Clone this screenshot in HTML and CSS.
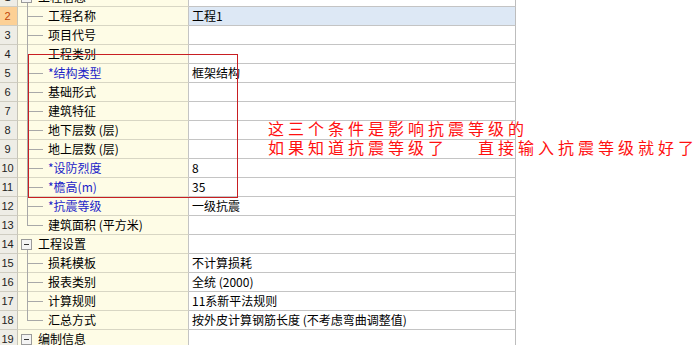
FILE: index.html
```html
<!DOCTYPE html>
<html lang="zh-CN">
<head>
<meta charset="utf-8">
<title>工程信息</title>
<link rel="stylesheet" href="styles.css">
</head>
<body>
<div class="sheet">
  <div class="row"><div class="num">1</div><div class="tree group"><span class="toggle"></span>工程信息</div><div class="val"></div></div>
  <div class="row sel"><div class="num">2</div><div class="tree child">工程名称</div><div class="val">工程1</div></div>
  <div class="row"><div class="num">3</div><div class="tree child">项目代号</div><div class="val"></div></div>
  <div class="row"><div class="num">4</div><div class="tree child">工程类别</div><div class="val"></div></div>
  <div class="row"><div class="num">5</div><div class="tree child req">*结构类型</div><div class="val">框架结构</div></div>
  <div class="row"><div class="num">6</div><div class="tree child">基础形式</div><div class="val"></div></div>
  <div class="row"><div class="num">7</div><div class="tree child">建筑特征</div><div class="val"></div></div>
  <div class="row"><div class="num">8</div><div class="tree child">地下层数 (层)</div><div class="val"></div></div>
  <div class="row"><div class="num">9</div><div class="tree child">地上层数 (层)</div><div class="val"></div></div>
  <div class="row"><div class="num">10</div><div class="tree child req">*设防烈度</div><div class="val">8</div></div>
  <div class="row"><div class="num">11</div><div class="tree child req">*檐高(m)</div><div class="val">35</div></div>
  <div class="row"><div class="num">12</div><div class="tree child req">*抗震等级</div><div class="val">一级抗震</div></div>
  <div class="row"><div class="num">13</div><div class="tree child last">建筑面积 (平方米)</div><div class="val"></div></div>
  <div class="row"><div class="num">14</div><div class="tree group"><span class="toggle"></span>工程设置</div><div class="val"></div></div>
  <div class="row"><div class="num">15</div><div class="tree child">损耗模板</div><div class="val">不计算损耗</div></div>
  <div class="row"><div class="num">16</div><div class="tree child">报表类别</div><div class="val">全统 (2000)</div></div>
  <div class="row"><div class="num">17</div><div class="tree child">计算规则</div><div class="val">11系新平法规则</div></div>
  <div class="row"><div class="num">18</div><div class="tree child last">汇总方式</div><div class="val">按外皮计算钢筋长度 (不考虑弯曲调整值)</div></div>
  <div class="row"><div class="num">19</div><div class="tree group"><span class="toggle"></span>编制信息</div><div class="val"></div></div>
</div>
<div class="annot-box"></div>
<div class="annot-text">
  <div class="line">这三个条件是影响抗震等级的</div>
  <div class="line"><span>如果知道抗震等级了</span><span class="gap">直接输入抗震等级就好了</span></div>
</div>
</body>
</html>
```

FILE: styles.css
```css
html, body {
  margin: 0;
  padding: 0;
  background: #ffffff;
  overflow: hidden;
}
body {
  width: 700px;
  height: 345px;
  position: relative;
  font-family: "Noto Sans CJK SC", "Liberation Sans", sans-serif;
  font-size: 12px;
  color: #000;
}
.sheet {
  margin-top: -12px;
  display: flex;
  flex-direction: column;
}
.row {
  display: flex;
  height: 19px;
}
.row > div {
  box-sizing: border-box;
  height: 19px;
  border-bottom: 1px solid #c4c4c4;
  line-height: 18px;
  white-space: nowrap;
}
.num {
  width: 18px;
  background: #eeede6;
  border-right: 1px solid #c6c4b8;
  border-bottom-color: #cfcdc2 !important;
  font-family: "Liberation Sans", sans-serif;
  font-size: 11px;
  color: #222;
  text-align: center;
  padding-right: 2px;
}
.sel .num {
  background: #fcd095;
  color: #c0440a;
}
.sel .val {
  background: #dde8f5;
}
.tree {
  width: 171px;
  background: #fefce6;
  border-right: 1px solid #c4c4c4;
  border-bottom-color: #d8d6c4 !important;
  position: relative;
}
.val {
  width: 327px;
  border-right: 1px solid #bdbdbd;
  padding-left: 3px;
  overflow: hidden;
}
.group {
  padding-left: 3px;
  display: flex;
  align-items: center;
}
.toggle {
  width: 11px;
  height: 11px;
  box-sizing: border-box;
  border: 1px solid #9a9a9a;
  background: #f4f4f4;
  margin-right: 6px;
  position: relative;
}
.toggle::after {
  content: "";
  position: absolute;
  left: 2px;
  top: 4px;
  width: 5px;
  height: 1px;
  background: #333;
}
.group::before {
  content: "";
  position: absolute;
  left: 9px;
  top: 15px;
  bottom: -1px;
  width: 1px;
  background: #a8a8a8;
}
.child {
  padding-left: 30px;
}
.child::before {
  content: "";
  position: absolute;
  left: 9px;
  top: 0;
  bottom: -1px;
  width: 1px;
  background: #a8a8a8;
}
.child.last::before {
  bottom: 9px;
}
.child::after {
  content: "";
  position: absolute;
  left: 9px;
  top: 9px;
  width: 16px;
  height: 1px;
  background: #a8a8a8;
}
.req {
  color: #1c24c8;
}
.annot-box {
  position: absolute;
  left: 28px;
  top: 54px;
  width: 210px;
  height: 144px;
  box-sizing: border-box;
  border: 1px solid #c81e22;
}
.annot-text {
  position: absolute;
  left: 268px;
  top: 119px;
  color: #ff1010;
  font-size: 16px;
  letter-spacing: 4px;
  line-height: 19px;
  white-space: nowrap;
}
.line {
  height: 19px;
}
.gap {
  margin-left: 30px;
}
```
